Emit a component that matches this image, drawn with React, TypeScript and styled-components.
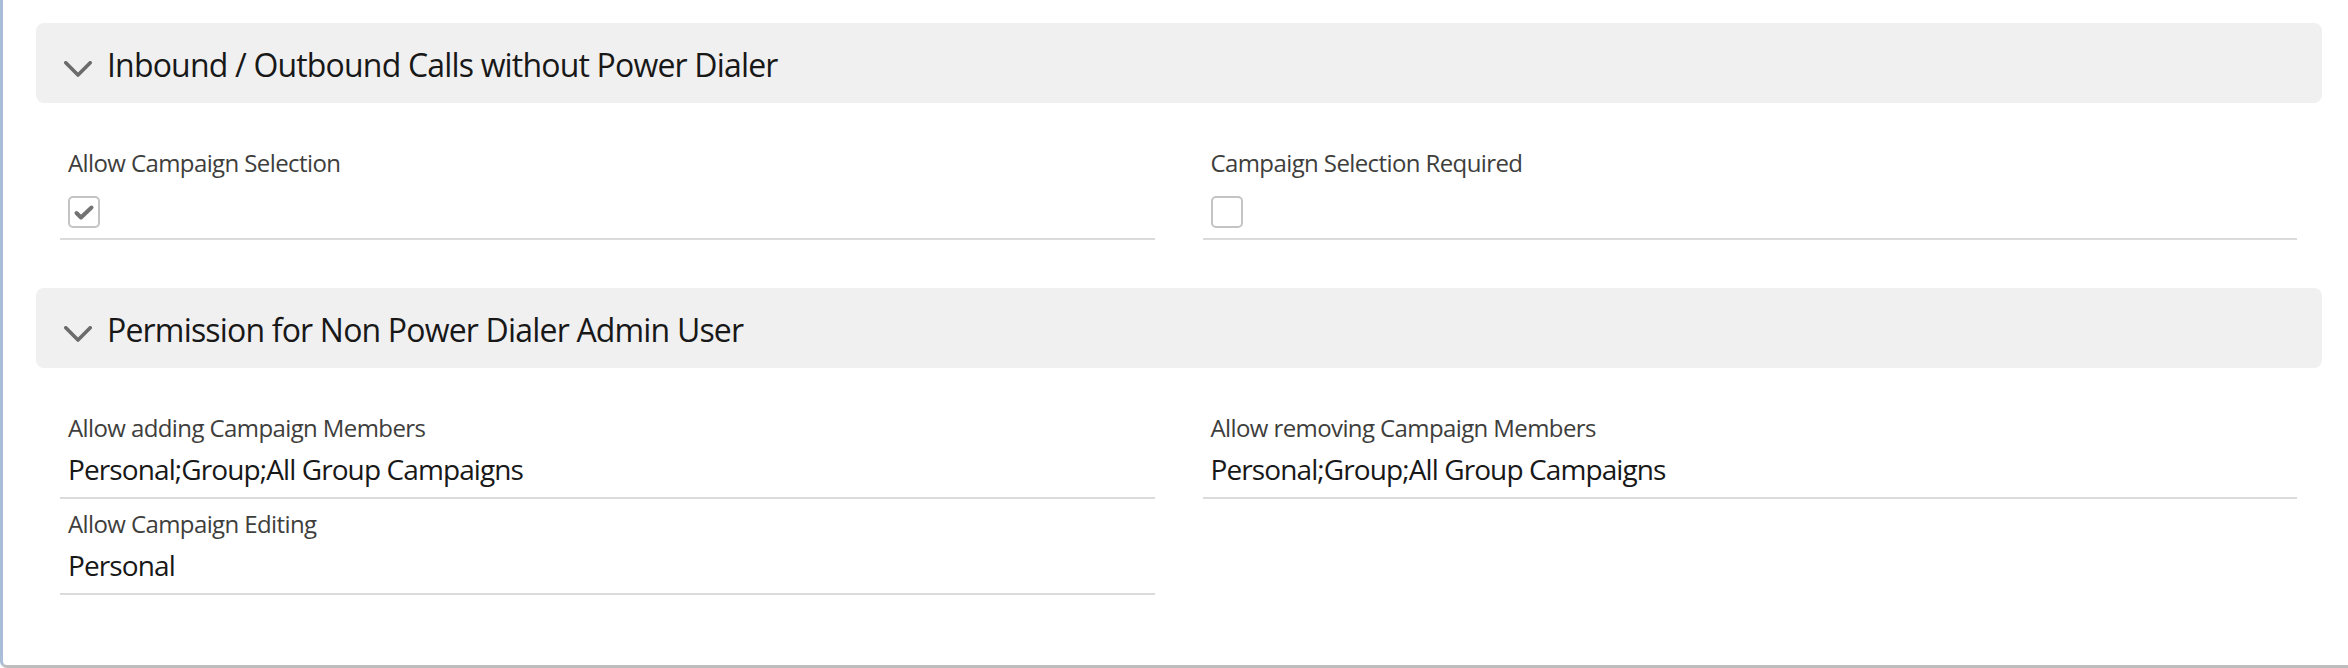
import React from "react";
import styled, { createGlobalStyle } from "styled-components";

const GlobalStyle = createGlobalStyle`
  html, body {
    margin: 0;
    padding: 0;
    background: #ffffff;
  }
  body {
    font-family: "Segoe UI", "Open Sans", "Noto Sans", sans-serif;
    color: #181818;
  }
`;

const Frame = styled.div`
  box-sizing: border-box;
  height: 668px;
  padding: 23px 26px 0 33px;
  border-left: 3px solid #a9bcd8;
  border-bottom: 3px solid #bdbdbd;
  border-bottom-left-radius: 7px;
  background: #ffffff;
  display: flex;
  flex-direction: column;
  gap: 48px;
`;

const Section = styled.section`
  display: flex;
  flex-direction: column;
`;

const SectionHeader = styled.div`
  box-sizing: border-box;
  height: 80px;
  background: #f0f0f0;
  border-radius: 8px;
  display: flex;
  align-items: center;
  padding-left: 28px;
  gap: 15px;
`;

const Chevron = styled.svg`
  width: 28px;
  height: 16px;
  margin-top: 12px;
  flex: none;
`;

const SectionTitle = styled.h3`
  margin: 0;
  padding-top: 3px;
  font-size: 32px;
  line-height: 40px;
  font-weight: 400;
  color: #181818;
  letter-spacing: -0.82px;
`;

const FieldGrid = styled.div`
  display: grid;
  grid-template-columns: 1fr 1fr;
  column-gap: 48px;
  padding: 35px 25px 0 24px;
`;

const Field = styled.div<{ $blank?: boolean }>`
  box-sizing: border-box;
  padding: 7px 8px 7px;
  border-bottom: 2px solid ${(p) => (p.$blank ? "transparent" : "#dddbda")};
  min-width: 0;
`;

const Label = styled.div`
  font-size: 24px;
  line-height: 36px;
  color: #3e3e3c;
  letter-spacing: -0.6px;
  white-space: nowrap;
`;

const Value = styled.div`
  margin-top: 2px;
  font-size: 28px;
  line-height: 42px;
  min-height: 42px;
  color: #181818;
  letter-spacing: -0.9px;
  white-space: nowrap;
`;

const CheckValue = styled.div`
  margin-top: 4px;
  height: 46px;
  box-sizing: border-box;
  padding-top: 11px;
`;

const CheckBox = styled.span`
  box-sizing: border-box;
  display: flex;
  align-items: center;
  justify-content: center;
  width: 32px;
  height: 32px;
  border: 2px solid #c4c4c4;
  border-radius: 5px;
  background: #ffffff;
`;

const ChevronIcon = () => (
  <Chevron viewBox="0 0 28 16" aria-hidden="true">
    <polyline
      points="1.8,1.8 14,14 26.2,1.8"
      fill="none"
      stroke="#6b6b6b"
      strokeWidth="3.6"
      strokeLinecap="round"
      strokeLinejoin="round"
    />
  </Chevron>
);

const CheckMark = () => (
  <svg width="22" height="18" viewBox="0 0 22 18" aria-hidden="true">
    <polyline
      points="3.5,10 8,14.5 18.5,4.5"
      fill="none"
      stroke="#737373"
      strokeWidth="4"
      strokeLinecap="round"
      strokeLinejoin="round"
    />
  </svg>
);

const Header = ({ title }: { title: string }) => (
  <SectionHeader>
    <ChevronIcon />
    <SectionTitle>{title}</SectionTitle>
  </SectionHeader>
);

const CheckField = ({ label, checked }: { label: string; checked: boolean }) => (
  <Field>
    <Label>{label}</Label>
    <CheckValue>
      <CheckBox>{checked ? <CheckMark /> : null}</CheckBox>
    </CheckValue>
  </Field>
);

const TextField = ({ label, value }: { label: string; value: string }) => (
  <Field>
    <Label>{label}</Label>
    <Value>{value}</Value>
  </Field>
);

export default function App() {
  return (
    <>
      <GlobalStyle />
      <Frame>
        <Section>
          <Header title="Inbound / Outbound Calls without Power Dialer" />
          <FieldGrid>
            <CheckField label="Allow Campaign Selection" checked />
            <CheckField label="Campaign Selection Required" checked={false} />
          </FieldGrid>
        </Section>
        <Section>
          <Header title="Permission for Non Power Dialer Admin User" />
          <FieldGrid>
            <TextField label="Allow adding Campaign Members" value="Personal;Group;All Group Campaigns" />
            <TextField label="Allow removing Campaign Members" value="Personal;Group;All Group Campaigns" />
            <TextField label="Allow Campaign Editing" value="Personal" />
            <Field $blank />
          </FieldGrid>
        </Section>
      </Frame>
    </>
  );
}
